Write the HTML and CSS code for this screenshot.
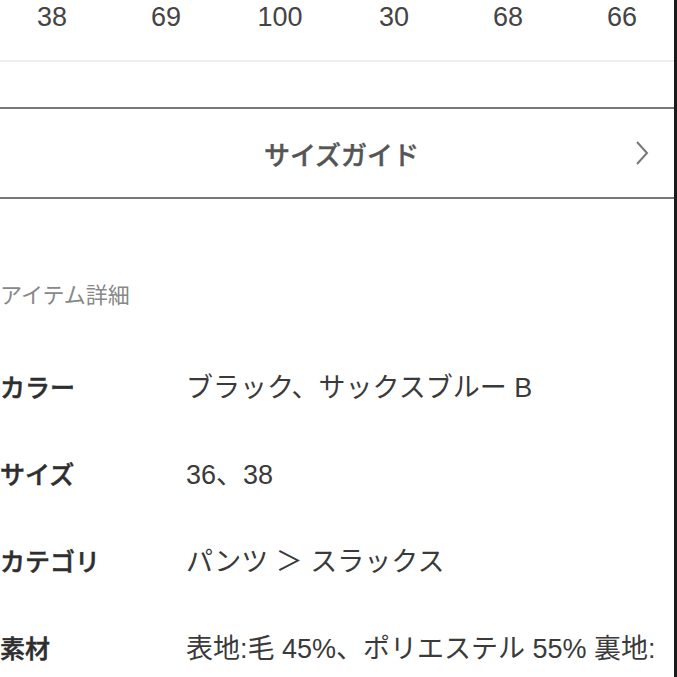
FILE: index.html
```html
<!DOCTYPE html>
<html lang="ja">

<head>
    <meta charset="UTF-8">
    <meta name="viewport" content="width=device-width, initial-scale=1.0">
    <title>アイテム詳細</title>
    <link rel="stylesheet" href="styles.css">
</head>

<body>
    <div class="page">
        <div class="size-table">
            <div class="size-row">
                <span>38</span>
                <span>69</span>
                <span>100</span>
                <span>30</span>
                <span>68</span>
                <span>66</span>
            </div>
        </div>

        <div class="guide">
            <span class="guide-title">サイズガイド</span>
            <svg class="chevron" width="14" height="24" viewBox="0 0 14 24">
                <polyline points="2,1 12,12 2,23" fill="none" stroke="#777" stroke-width="2" />
            </svg>
        </div>

        <div class="details">
            <h2 class="details-title">アイテム詳細</h2>
            <dl class="spec">
                <div class="spec-row">
                    <dt>カラー</dt>
                    <dd>ブラック、サックスブルー B</dd>
                </div>
                <div class="spec-row">
                    <dt>サイズ</dt>
                    <dd>36、38</dd>
                </div>
                <div class="spec-row">
                    <dt>カテゴリ</dt>
                    <dd>パンツ ＞ スラックス</dd>
                </div>
                <div class="spec-row">
                    <dt>素材</dt>
                    <dd>表地:毛 45%、ポリエステル 55% 裏地:</dd>
                </div>
            </dl>
        </div>
    </div>
</body>

</html>
```

FILE: styles.css
```css
body {
    margin: 0;
    overflow: hidden;
    background-color: #fff;
    font-family: "Liberation Sans", "Noto Sans CJK JP", sans-serif;
}

.page {
    width: 674px;
    height: 677px;
    border-right: 3px solid #1a1a1a;
    overflow: hidden;
}

.size-table {
    padding-bottom: 45px;
    border-bottom: 2px solid #777;
}

.size-row {
    display: grid;
    grid-template-columns: repeat(6, 114px);
    margin-left: -5px;
    height: 60px;
    border-bottom: 2px solid #eeeeee;
}

.size-row span {
    text-align: center;
    font-size: 27px;
    line-height: 34px;
    color: #444;
}

.guide {
    display: grid;
    grid-template-columns: 1fr auto 1fr;
    align-items: center;
    height: 88px;
    padding: 0 25px 0 34px;
    border-bottom: 2px solid #777;
}

.guide-title {
    grid-column: 2;
    font-size: 26px;
    font-weight: 500;
    color: #555;
    -webkit-text-stroke: 0.4px #555;
}

.chevron {
    grid-column: 3;
    justify-self: end;
}

.details-title {
    margin: 82px 0 31px;
    font-size: 22px;
    line-height: 30px;
    font-weight: normal;
    color: #888;
}

.spec {
    margin: 0;
}

.spec-row {
    display: flex;
    align-items: center;
    height: 87px;
}

.spec-row dt {
    width: 186px;
    flex-shrink: 0;
    font-size: 25px;
    font-weight: 500;
    color: #2e2e2e;
    -webkit-text-stroke: 0.5px #2e2e2e;
}

.spec-row dd {
    margin: 0;
    font-size: 27px;
    color: #3a3a3a;
    white-space: nowrap;
}
```
